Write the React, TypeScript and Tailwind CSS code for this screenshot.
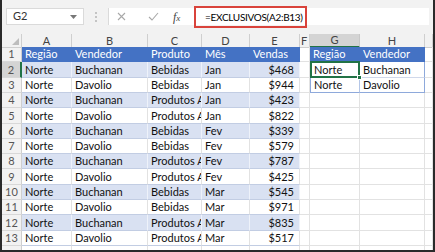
import React from "react";

const cols = ["A", "B", "C", "D", "E", "F", "G", "H", ""];

const data: string[][] = [
  ["Norte", "Buchanan", "Bebidas", "Jan", "$468"],
  ["Norte", "Davolio", "Bebidas", "Jan", "$944"],
  ["Norte", "Buchanan", "Produtos Alimentícios", "Jan", "$423"],
  ["Norte", "Davolio", "Produtos Alimentícios", "Jan", "$822"],
  ["Norte", "Buchanan", "Bebidas", "Fev", "$339"],
  ["Norte", "Davolio", "Bebidas", "Fev", "$579"],
  ["Norte", "Buchanan", "Produtos Alimentícios", "Fev", "$787"],
  ["Norte", "Davolio", "Produtos Alimentícios", "Fev", "$425"],
  ["Norte", "Buchanan", "Bebidas", "Mar", "$545"],
  ["Norte", "Davolio", "Bebidas", "Mar", "$971"],
  ["Norte", "Buchanan", "Produtos Alimentícios", "Mar", "$835"],
  ["Norte", "Davolio", "Produtos Alimentícios", "Mar", "$517"],
];

// row heights so the 13 rows line up with the screenshot
const rowH = ["h-[15px]", "h-[16px]", "h-[15px]", "h-[15px]", "h-[16px]", "h-[15px]", "h-[15px]", "h-[15px]", "h-[16px]", "h-[15px]", "h-[15px]", "h-[16px]", "h-[15px]"];

const gridCols = "grid grid-cols-[20px_50px_76px_54px_48px_50px_10px_50px_65px_1fr]";

const Cell = ({ children, className = "" }: { children?: React.ReactNode; className?: string }) => (
  <div className={`relative flex items-end overflow-hidden whitespace-nowrap border-r border-b border-[#e2e2e2] px-[3px] leading-[14px] ${className}`}>
    {children}
  </div>
);

const RowHead = ({ n, active }: { n: number; active?: boolean }) => (
  <div
    className={`flex items-end justify-center border-b border-[#d8d8d8] text-[11px] leading-[14px] text-[#555] ${
      active ? "bg-[#d4d4d4] border-r-2 border-r-[#217346]" : "bg-[#f2f2f2] border-r border-r-[#cfcfcf]"
    }`}
  >
    {n}
  </div>
);

export default function App() {
  return (
    <div className="w-[435px] h-[252px] overflow-hidden bg-white border-l-2 border-r-2 border-b-2 border-[#2a2a2a] font-['Lato','Liberation_Sans',sans-serif] text-[11px] text-[#111]">
      {/* formula bar */}
      <div className="h-[34px] bg-[#f2f2f2] flex items-start pt-[8px] pl-[4px]">
        <div className="w-[78px] h-[17px] bg-white border border-[#dadada] flex items-center justify-between px-[6px] text-[11px] text-[#333]">
          <span>G2</span>
          <svg width="7" height="4" viewBox="0 0 7 4">
            <path d="M0 0 L7 0 L3.5 4 Z" fill="#777" />
          </svg>
        </div>
        <div className="w-[24px] h-[17px] flex flex-col items-center justify-center gap-[2px]">
          <span className="w-[2px] h-[2px] bg-[#c4c4c4]" />
          <span className="w-[2px] h-[2px] bg-[#c4c4c4]" />
          <span className="w-[2px] h-[2px] bg-[#c4c4c4]" />
        </div>
        <div className="w-[86px] h-[17px] bg-white border-l border-[#dadada] flex items-center">
          <svg className="ml-[8px]" width="9" height="9" viewBox="0 0 9 9">
            <path d="M1 1 L8 8 M8 1 L1 8" stroke="#a8a8a8" strokeWidth="1.1" />
          </svg>
          <svg className="ml-[22px]" width="11" height="9" viewBox="0 0 11 9">
            <path d="M1 5 L4 8 L10 1" stroke="#a8a8a8" strokeWidth="1.1" fill="none" />
          </svg>
          <span className="ml-[14px] font-['Liberation_Serif',serif] italic text-[12px] text-[#444] leading-none">
            f<span className="text-[9px]">x</span>
          </span>
        </div>
        <div className="flex-1 h-[17px] bg-white mr-[4px] relative">
          <div className="absolute left-[0px] top-[-2px] w-[113px] h-[22px] border-2 border-[#d9433b] flex items-center pl-[9px] text-[10px] tracking-[-0.3px] text-black whitespace-nowrap">
            =EXCLUSIVOS(A2:B13)
          </div>
        </div>
      </div>

      {/* column headers */}
      <div className={`${gridCols} h-[13px] text-[11px] leading-[12px] text-[#444]`}>
        <div className="relative bg-[#f2f2f2] border-r border-b border-[#cfcfcf]">
          <svg className="absolute right-[2px] bottom-[2px]" width="7" height="7" viewBox="0 0 7 7">
            <path d="M7 0 L7 7 L0 7 Z" fill="#bdbdbd" />
          </svg>
        </div>
        {cols.map((c, i) =>
          c === "G" ? (
            <div key={i} className="flex items-center justify-center bg-[#d4d4d4] border-r border-[#c8c8c8] border-b-2 border-b-[#217346]">
              {c}
            </div>
          ) : (
            <div key={i} className={`flex items-center ${c === "F" ? "justify-start pl-[1px]" : "justify-center"} bg-[#f2f2f2] border-r border-b border-[#cfcfcf]`}>
              {c}
            </div>
          )
        )}
      </div>

      {/* row 1 */}
      <div className={`${gridCols} ${rowH[0]}`}>
        <RowHead n={1} />
        {["Região", "Vendedor", "Produto", "Mês", "Vendas"].map((t) => (
          <Cell key={t} className="bg-[#4472c4] text-white border-r-[#4472c4] border-b-[#4472c4]">
            {t}
          </Cell>
        ))}
        <Cell />
        <Cell className="bg-[#4472c4] text-white border-r-[#4472c4] border-b-[#4472c4]">Região</Cell>
        <Cell className="bg-[#4472c4] text-white border-r-[#4472c4] border-b-[#4472c4]">Vendedor</Cell>
        <Cell />
      </div>

      {/* rows 2..13 */}
      {data.map((r, i) => {
        const n = i + 2;
        const band = i % 2 === 0;
        const bg = band ? "bg-[#d9e1f2] border-r-[#eef2fa]" : "bg-white border-r-[#e2e2e2]";
        const last = i === data.length - 1;
        return (
          <div key={n} className={`${gridCols} ${rowH[i + 1]}`}>
            <RowHead n={n} active={n === 2} />
            {r.map((t, j) => (
              <Cell
                key={j}
                className={`${bg} border-b-[#c2cde3] ${j === 4 ? "justify-end pr-[5px] border-r-[#8ea9db]" : ""} ${last ? "border-b-[#8ea9db]" : ""}`}
              >
                {t}
              </Cell>
            ))}
            <Cell />
            {n === 2 && (
              <>
                <Cell className="border-l border-l-[#8ea9db] border-r-[#b4c6e7] border-b-[#d0d8ea] overflow-visible">
                  <div className="absolute left-[-1px] top-[-1px] right-[-1px] bottom-[-1px] border-2 border-[#217346]" />
                  <div className="absolute right-[-3px] bottom-[-3px] w-[5px] h-[5px] bg-[#217346] border border-white z-10" />
                  Norte
                </Cell>
                <Cell className="border-r-[#8ea9db] border-b-[#d0d8ea]">Buchanan</Cell>
              </>
            )}
            {n === 3 && (
              <>
                <Cell className="border-l border-l-[#8ea9db] border-r-[#b4c6e7] border-b-[#8ea9db]">Norte</Cell>
                <Cell className="border-r-[#8ea9db] border-b-[#8ea9db]">Davolio</Cell>
              </>
            )}
            {n > 3 && (
              <>
                <Cell />
                <Cell />
              </>
            )}
            <Cell />
          </div>
        );
      })}

      {/* row 14 (partial) */}
      <div className={`${gridCols} h-[4px]`}>
        <div className="bg-[#f2f2f2] border-r border-[#cfcfcf]" />
        {cols.map((c, i) => (
          <div key={i} className="border-r border-[#e2e2e2]" />
        ))}
      </div>
    </div>
  );
}
